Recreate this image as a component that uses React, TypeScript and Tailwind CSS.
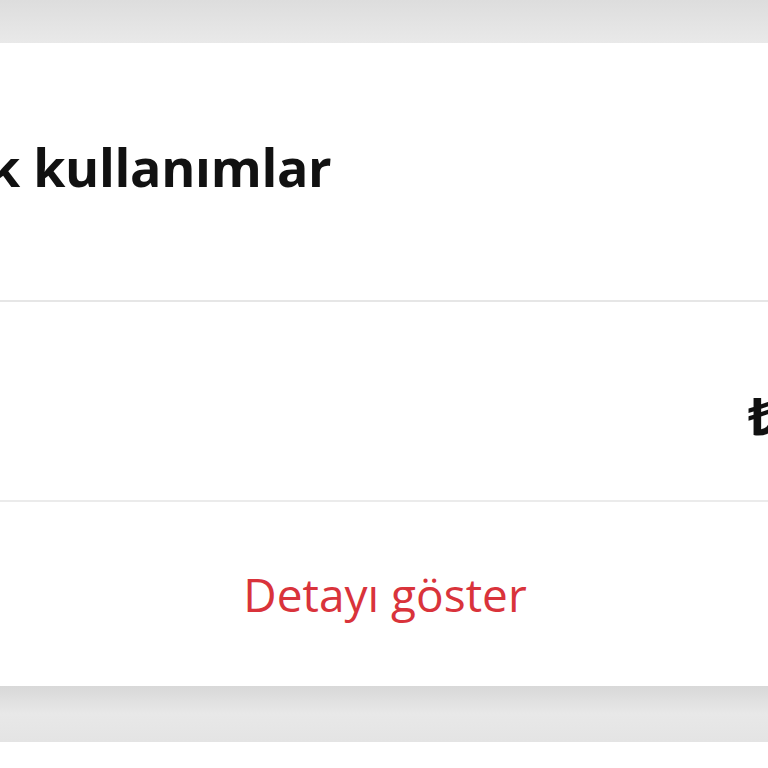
export default function App() {
  return (
    <div className="w-[768px] h-[768px] overflow-hidden bg-white" style={{ fontFamily: '"Open Sans", "Noto Sans", sans-serif' }}>
      <div className="h-[43px] bg-gradient-to-b from-[#dddddd] to-[#e9e9e9]" />
      <div className="bg-white overflow-hidden">
        <div className="h-[257px] flex items-center">
          <span className="-ml-[12px] pb-[10px] text-[52px] font-bold text-[#111111] tracking-[-0.3px] whitespace-nowrap">k kullanımlar</span>
        </div>
        <div className="h-[2px] bg-[#e6e6e6]" />
        <div className="h-[198px] flex items-center justify-end">
          <span className="-mr-[10px] pt-[28px] text-[52px] font-bold text-[#111111] whitespace-nowrap">₺</span>
        </div>
        <div className="h-[2px] bg-[#ebebeb]" />
        <div className="h-[184px] flex items-center justify-center">
          <span className="pl-[2px] text-[46px] text-[#d9333b] whitespace-nowrap">Detayı göster</span>
        </div>
      </div>
      <div className="h-[56px] bg-gradient-to-b from-[#d8d8d8] via-[#e8e8e8] to-[#e4e4e4]" />
      <div className="h-[26px] bg-white" />
    </div>
  );
}
